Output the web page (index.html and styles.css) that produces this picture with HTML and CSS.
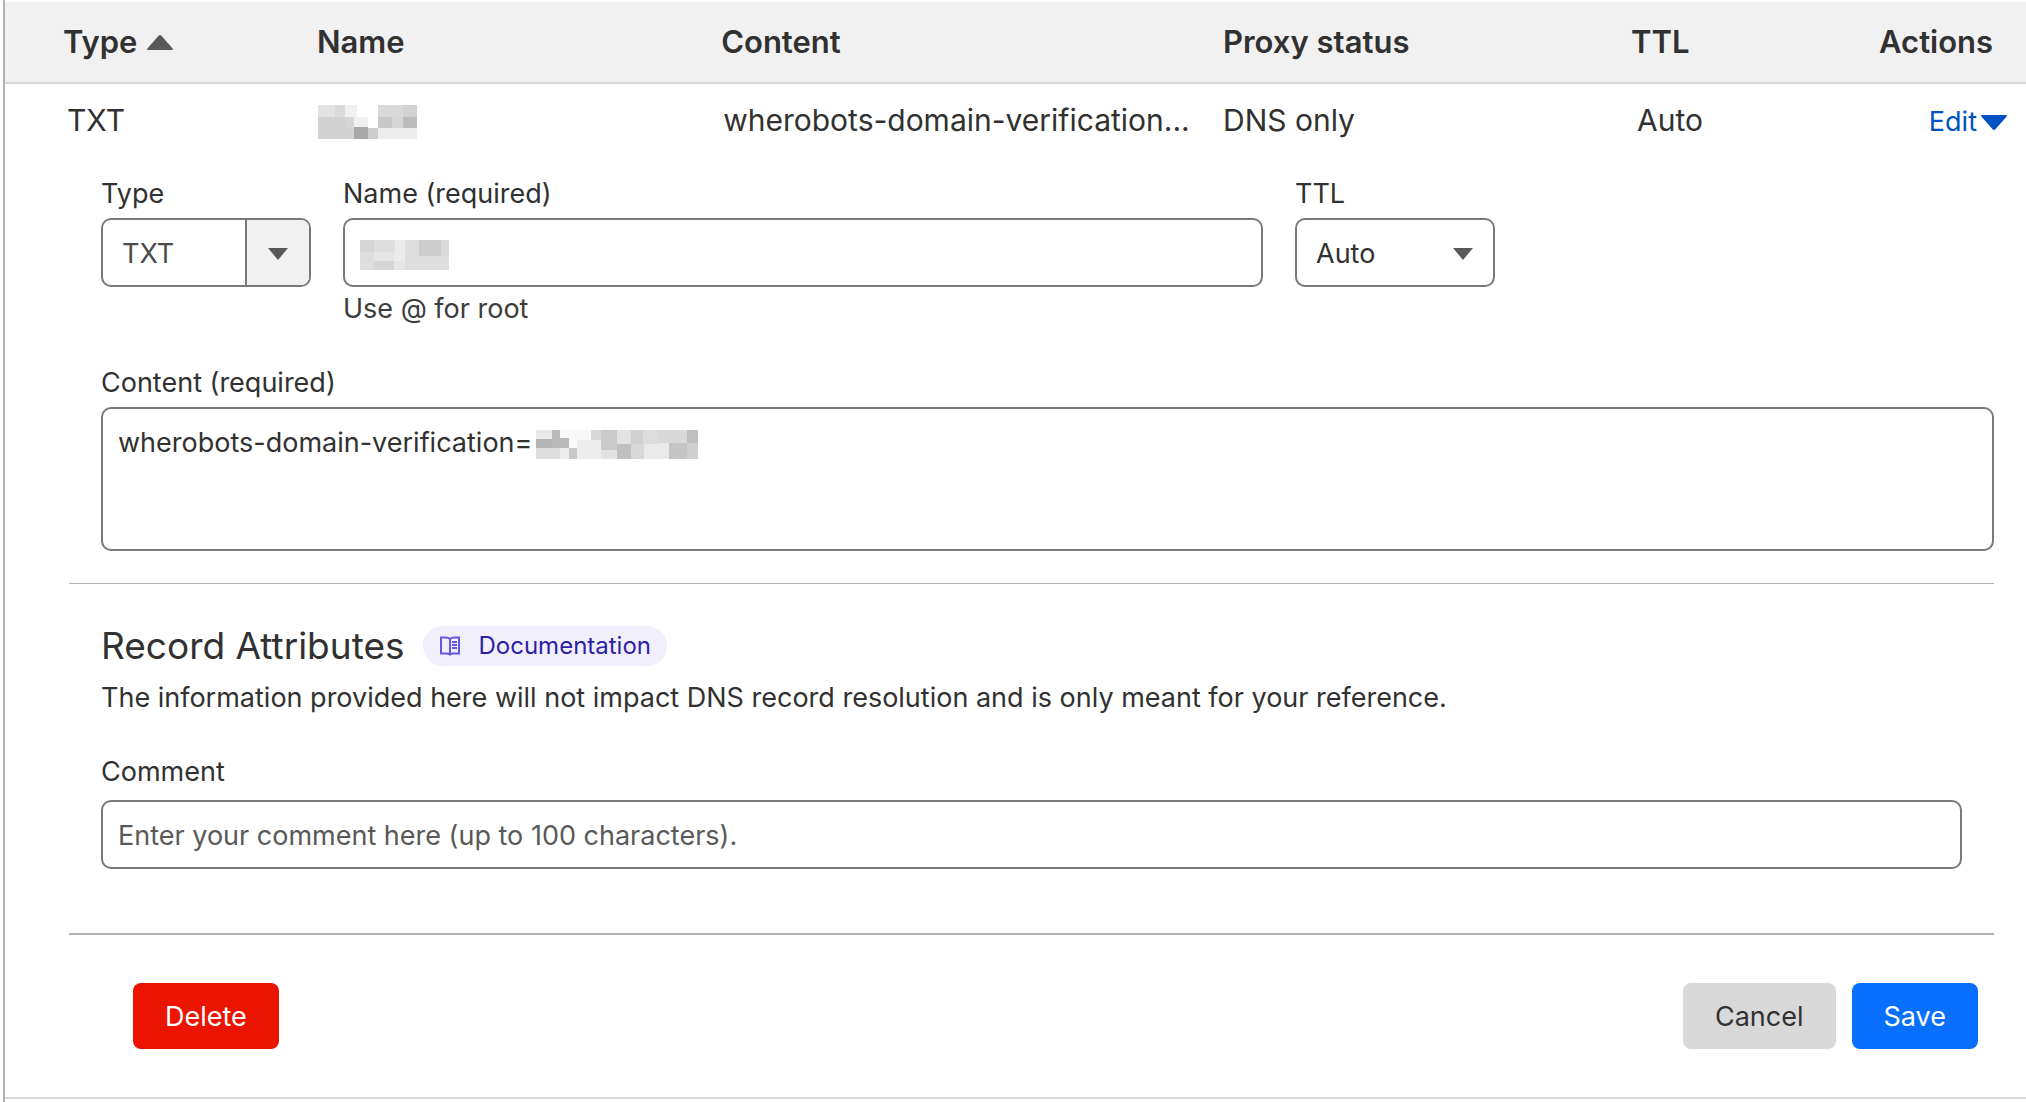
FILE: index.html
```html
<!DOCTYPE html>
<html lang="en">
<head>
<meta charset="utf-8">
<meta name="viewport" content="width=device-width, initial-scale=1">
<title>DNS records</title>
<link rel="stylesheet" href="styles.css">
</head>
<body>
<main class="records">
  <table class="records-table">
    <colgroup>
      <col class="col-type">
      <col class="col-name">
      <col class="col-content">
      <col class="col-proxy">
      <col class="col-ttl">
      <col class="col-actions">
    </colgroup>
    <thead>
      <tr>
        <th scope="col" class="lead-cell" aria-sort="ascending">
          <span class="sort">Type
            <svg class="caret" viewBox="0 0 26 15" aria-hidden="true"><path fill="#595959" d="M1 15Q-.5 15 .6 13.300L11.600.8Q13 -.6 14.400.8L25.400 13.300Q26.500 15 25 15Z"/></svg>
          </span>
        </th>
        <th scope="col">Name</th>
        <th scope="col">Content</th>
        <th scope="col">Proxy status</th>
        <th scope="col">TTL</th>
        <th scope="col">Actions</th>
      </tr>
    </thead>
    <tbody>
      <tr class="record">
        <td class="lead-cell">TXT</td>
        <td class="name-cell">
          <svg class="mosaic" width="99" height="34" viewBox="0 0 99 34" role="img" aria-label="Hidden name" shape-rendering="crispEdges">
            <path fill="#e3e3e3" d="M0 0h17v12H0z"/><path fill="#dadada" d="M17 0h10v12H17zM60 0h25v12H60z"/><path fill="#f0f0f0" d="M27 0h12v12H27zM36 12h14v10H36z"/>
            <path fill="#d2d2d2" d="M0 12h27v22H0zM27 22h9v12h-9zM85 0h14v12H85z"/><path fill="#d6d6d6" d="M27 12h9v10h-9zM74 12h11v11H74z"/>
            <path fill="#a8a8a8" d="M36 22h14v12H36z"/><path fill="#cdcdcd" d="M50 23h10v11H50z"/><path fill="#c8c8c8" d="M60 12h14v11H60z"/><path fill="#bcbcbc" d="M85 12h14v11H85z"/><path fill="#ededed" d="M60 23h39v11H60z"/>
          </svg>
        </td>
        <td class="content-cell">wherobots-domain-verification...</td>
        <td>DNS only</td>
        <td class="ttl-cell">Auto</td>
        <td class="actions-cell">
          <button type="button" class="edit" aria-expanded="true">Edit<svg class="caret" viewBox="0 0 26 15" aria-hidden="true"><path fill="#0051c3" d="M1 0Q-.5 0 .6 1.700L11.600 14.200Q13 15.600 14.400 14.200L25.400 1.700Q26.500 0 25 0Z"/></svg></button>
        </td>
      </tr>
      <tr>
        <td colspan="6" class="editor-cell">
          <form class="editor">
            <section class="section fields">
              <div class="field-row">
                <div class="field field-type">
                  <label for="type">Type</label>
                  <div class="select select-split">
                    <select id="type"><option>TXT</option></select>
                    <span class="select-arrow"><svg width="20" height="12" viewBox="0 0 20 12" aria-hidden="true"><path fill="#595959" d="M0 0h20L10 12z"/></svg></span>
                  </div>
                </div>
                <div class="field field-name">
                  <label for="name">Name (required)</label>
                  <div class="overlay-host">
                    <input id="name" type="text" aria-describedby="name-hint">
                    <svg class="mosaic name-mask" width="89" height="30" viewBox="0 0 89 30" aria-hidden="true" shape-rendering="crispEdges">
                      <path fill="#dedede" d="M0 0h89v30H0z"/><path fill="#d6d6d6" d="M0 0h14v12H0zM14 21h20v9H14z"/><path fill="#e6e6e6" d="M14 12h20v9H14zM34 21h11v9H34z"/><path fill="#ebebeb" d="M35 0h10v21H34v-9h1z"/><path fill="#cdcdcd" d="M59 0h22v16H59z"/><path fill="#d9d9d9" d="M81 0h8v16h-8z"/>
                    </svg>
                  </div>
                  <p id="name-hint" class="hint">Use @ for root</p>
                </div>
                <div class="field field-ttl">
                  <label for="ttl">TTL</label>
                  <div class="select">
                    <select id="ttl"><option>Auto</option></select>
                    <span class="select-arrow"><svg width="20" height="12" viewBox="0 0 20 12" aria-hidden="true"><path fill="#595959" d="M0 0h20L10 12z"/></svg></span>
                  </div>
                </div>
              </div>
              <div class="field">
                <label for="content">Content (required)</label>
                <div class="overlay-host">
                  <textarea id="content">wherobots-domain-verification=</textarea>
                  <svg class="mosaic content-mask" width="162" height="29" viewBox="0 0 162 29" aria-hidden="true" shape-rendering="crispEdges">
                    <path fill="#f9f9f9" d="M0 0h162v29H0z"/><path fill="#e9e9e9" d="M0 0h16v9H0z"/><path fill="#bababa" d="M16 0h8v8h9v10H16z"/><path fill="#b4b4b4" d="M0 9h16v9H0z"/><path fill="#dfdfdf" d="M0 18h24v11H0z"/><path fill="#ededed" d="M24 18h9v11h-9zM41 10h24v19H41z"/>
                    <path fill="#c7c7c7" d="M33 18h8v11h-8z"/><path fill="#d8d8d8" d="M55 0h10v10H55z"/><path fill="#cacaca" d="M65 0h16v20H65z"/><path fill="#e3e3e3" d="M65 20h16v9H65zM81 0h14v14H81z"/><path fill="#c0c0c0" d="M81 14h14v15H81z"/><path fill="#d0d0d0" d="M95 0h12v14H95z"/><path fill="#d8d8d8" d="M95 14h13v15H95zM122 0h29v13h-29z"/><path fill="#dcdcdc" d="M107 0h15v14h-15z"/>
                    <path fill="#eaeaea" d="M108 14h14v-1h11v16h-25z"/><path fill="#c5c5c5" d="M133 13h18v16h-18z"/><path fill="#c0c0c0" d="M151 0h11v13h-11z"/><path fill="#cecece" d="M151 13h11v16h-11z"/>
                  </svg>
                </div>
              </div>
            </section>
            <section class="section attributes">
              <div class="attributes-title">
                <h2>Record Attributes</h2>
                <a class="docs" href="#documentation">
                  <svg width="22" height="20" viewBox="0 0 22 20" fill="none" stroke="#6656e2" stroke-width="2" aria-hidden="true"><path d="M11 18.500V3Q9.500 1.500 6.500 1.500H2V17.500H7.500Q10 17.500 11 18.500Q12 17.500 14.500 17.500H20V1.500H15.500Q12.500 1.500 11 3"/><path d="M13 6h5M13 9h5M13 12h5"/></svg>
                  Documentation
                </a>
              </div>
              <p class="description">The information provided here will not impact DNS record resolution and is only meant for your reference.</p>
              <div class="field field-comment">
                <label for="comment">Comment</label>
                <input id="comment" type="text" maxlength="100" placeholder="Enter your comment here (up to 100 characters).">
              </div>
            </section>
            <footer class="actions">
              <button type="button" class="button button-delete">Delete</button>
              <button type="button" class="button button-cancel">Cancel</button>
              <button type="submit" class="button button-save">Save</button>
            </footer>
          </form>
        </td>
      </tr>
    </tbody>
  </table>
</main>
</body>
</html>
```
FILE: styles.css
```css
*,
*::before,
*::after {
  box-sizing: border-box;
}

body {
  margin: 0;
  background: #fff;
  color: #313131;
  font: 27px/34px Inter, "Liberation Sans", sans-serif;
}

button,
input,
select,
textarea {
  margin: 0;
  color: inherit;
  font: inherit;
}

.records {
  min-height: 100vh;
  margin-left: 3px;
  padding-top: 2px;
  border-left: 2px solid #b2b2b2;
}

/* Records table */

.records-table {
  width: 100%;
  table-layout: fixed;
  border-collapse: separate;
  border-spacing: 0;
}

.col-type { width: 312px; }
.col-name { width: 20%; }
.col-proxy { width: 408px; }
.col-ttl { width: 248px; }
.col-actions { width: 147px; }

th,
td {
  padding: 0;
  text-align: left;
}

th {
  height: 82px;
  border-bottom: 2px solid #d9d9d9;
  background: #f1f1f1;
  font-size: 31px;
  font-weight: 600;
  line-height: 40px;
  white-space: nowrap;
}

th.lead-cell {
  padding-left: 58px;
}

.sort {
  display: flex;
  align-items: center;
  gap: 10px;
}

.caret {
  width: 26px;
  height: 15px;
}

.record td {
  height: 76px;
  padding-bottom: 4px;
  font-size: 30px;
  line-height: 40px;
  white-space: nowrap;
}

.record .lead-cell { padding-left: 62px; }
.record .content-cell { padding-left: 2px; }
.record .ttl-cell { padding-left: 6px; }

.record .name-cell {
  padding: 0 0 0 1px;
}

.record .actions-cell {
  padding: 0 19px 0 0;
}

.mosaic {
  display: block;
}

.edit {
  display: flex;
  align-items: center;
  gap: 4px;
  margin-left: auto;
  padding: 0;
  border: 0;
  background: none;
  color: #0051c3;
  font-size: 27px;
  line-height: 40px;
}

/* Record editor */

.editor-cell {
  border-bottom: 2px solid #d9d9d9;
}

.editor {
  padding: 17px 32px 48px 64px;
}

.section {
  padding-left: 32px;
}

.fields {
  display: grid;
  gap: 40px;
  padding-bottom: 32px;
  border-bottom: 1px solid #b2b2b2;
}

.field-row {
  display: flex;
  gap: 32px;
}

.field {
  display: flex;
  flex-direction: column;
  gap: 7px;
}

.field-type { width: 210px; }
.field-ttl { width: 200px; }

.field-name {
  flex: 0 1 920px;
}

input,
select,
textarea {
  display: block;
  width: 100%;
  height: 69px;
  padding: 2px 15px 0;
  border: 2px solid #797979;
  border-radius: 10px;
  background: #fff;
}

textarea {
  height: 144px;
  padding-top: 17px;
  resize: none;
}

.overlay-host,
.select {
  position: relative;
}

.name-mask {
  position: absolute;
  top: 22px;
  left: 17px;
}

.content-mask {
  position: absolute;
  top: 23px;
  left: 435px;
}

select {
  padding-left: 19px;
  appearance: none;
}

.select-split select {
  color: #4a4a4a;
}

.select-arrow {
  position: absolute;
  inset: 2px 2px 2px auto;
  display: grid;
  place-items: center;
  width: 60px;
  padding-top: 2px;
  border-radius: 0 8px 8px 0;
  pointer-events: none;
}

.select-split .select-arrow {
  width: 64px;
  border-left: 2px solid #797979;
  background: #f1f1f1;
}

.hint {
  margin: -2px 0 0;
  color: #3d3d3d;
}

/* Record attributes */

.attributes {
  padding-top: 38px;
  padding-right: 32px;
  padding-bottom: 64px;
  border-bottom: 2px solid #b2b2b2;
}

.attributes-title {
  display: flex;
  align-items: center;
  gap: 18px;
}

h2 {
  margin: 0;
  font-size: 37px;
  font-weight: 400;
  line-height: 48px;
}

.docs {
  display: flex;
  align-items: center;
  gap: 18px;
  height: 40px;
  padding: 0 16px;
  border-radius: 20px;
  background: #f2effd;
  color: #2c1fa8;
  font-size: 24px;
  text-decoration: none;
}

.description {
  margin: 11px 0 40px;
}

.field-comment {
  gap: 11px;
}

::placeholder {
  color: #595959;
  opacity: 1;
}

/* Form buttons */

.actions {
  display: flex;
  gap: 16px;
  padding: 48px 16px 0 64px;
}

.button {
  height: 66px;
  padding: 1px 32px 0;
  border: 0;
  border-radius: 8px;
}

.button-delete {
  margin-right: auto;
  background: #eb1400;
  color: #fff;
}

.button-cancel {
  background: #d9d9d9;
}

.button-save {
  background: #086fff;
  color: #fff;
}
```
